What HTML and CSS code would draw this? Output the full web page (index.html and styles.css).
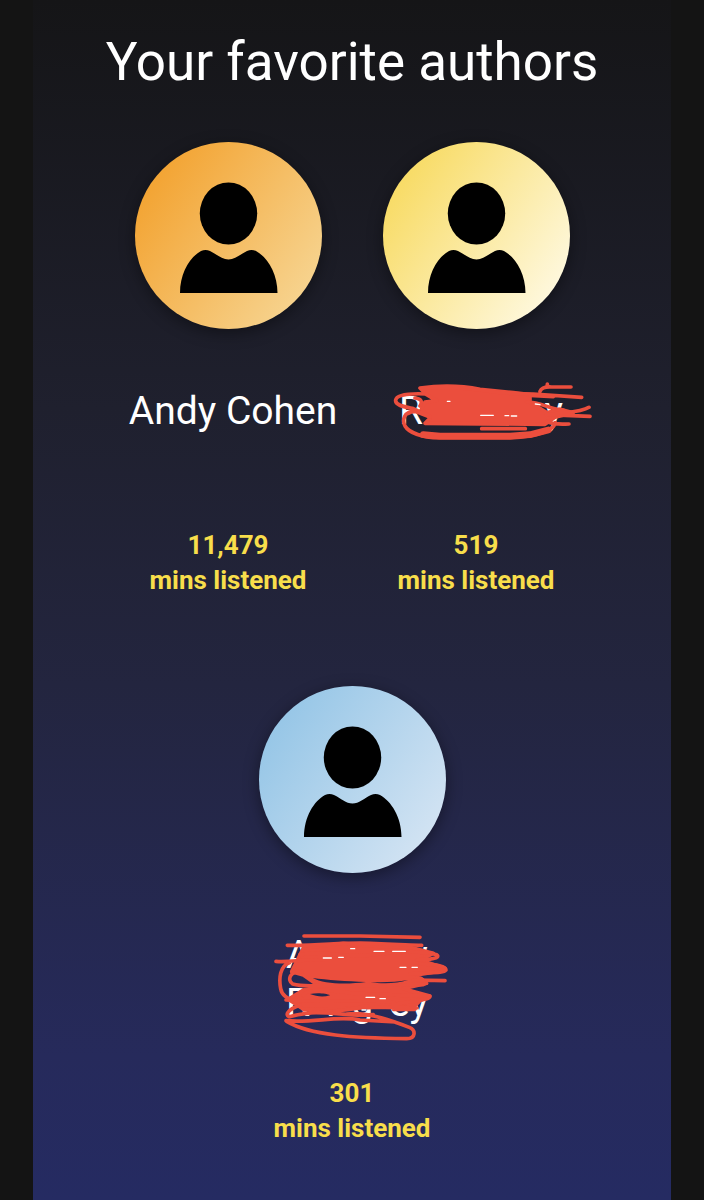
FILE: index.html
```html
<!DOCTYPE html>
<html lang="en">
<head>
    <meta charset="UTF-8">
    <meta name="viewport" content="width=device-width, initial-scale=1.0">
    <title>Your favorite authors</title>
    <link rel="stylesheet" href="styles.css">
</head>
<body>
    <svg class="symbols" aria-hidden="true">
        <symbol id="person" viewBox="0 0 187 187">
            <ellipse cx="93.5" cy="71.5" rx="28.7" ry="31"/>
            <path d="M45 151C45 131 55 115 66 109C69 107.500 72 107.500 75 109C82 112.500 87 117.500 93.500 117.500C100 117.500 105 112.500 112 109C115 107.500 118 107.500 121 109C132 115 142.500 131 142.500 151Z"/>
        </symbol>
    </svg>

    <main class="container">
        <h1>Your favorite authors</h1>
        <div class="authors">
            <section class="author">
                <div class="avatar orange"><svg><use href="#person"/></svg></div>
                <h2 class="name">Andy Cohen</h2>
                <p class="minutes">11,479<br>mins listened</p>
            </section>

            <section class="author">
                <div class="avatar yellow"><svg><use href="#person"/></svg></div>
                <h2 class="name">
                    <span class="hidden-name wide"><span>R</span><span>y</span></span>
                    <svg class="scribble one" viewBox="0 0 690 240" aria-hidden="true">
                        <path class="fill" d="M120 54C180 46 250 48 300 58L400 68L450 74L450 96L500 128L540 118L580 128L525 142L495 163L135 160L150 145L125 118L135 96L170 92L140 74Z"/>
                        <path class="bottom" d="M130 194L180 198L390 198L450 194L505 180"/>
                        <path d="M125 56C180 50 250 52 300 60S400 72 460 72L605 82M140 72C100 70 50 72 47 90C44 106 72 110 100 116L150 140M105 84C125 86 128 96 120 108M110 122C70 124 66 150 75 168C88 190 130 202 180 204L390 204C450 200 518 188 526 158M85 130C110 116 125 136 150 140M480 64C484 54 500 50 515 51H573M502 42V50M450 76L520 80M500 136C540 126 600 130 627 112M500 134L630 139M500 155C530 166 550 162 567 162M305 176H436M440 96C490 96 500 118 550 120"/>
                        <path class="gap" d="M202 94H210M375 137H386M466 102L480 104M302 136L340 136M394 138H410"/>
                    </svg>
                </h2>
                <p class="minutes">519<br>mins listened</p>
            </section>

            <section class="author">
                <div class="avatar blue"><svg><use href="#person"/></svg></div>
                <h2 class="name">
                    <span class="hidden-name"><span>A</span><span>w</span></span>
                    <span class="hidden-name"><span>R</span><span>i</span><span>g</span><span>ey</span></span>
                    <svg class="scribble two" viewBox="0 0 600 390" aria-hidden="true">
                        <path class="fill" d="M130 84L250 70L330 78L450 82L520 100L480 120L555 145L530 155L470 165L500 190L430 206L510 228L480 242L460 262L340 262L250 266L130 268L85 238L130 210L180 200L130 165L95 155L110 125Z"/>
                        <path d="M132 48L300 48L480 52M82 76C180 78 250 66 330 70S440 74 485 76M120 104C200 90 260 116 340 104S500 94 530 104C544 114 510 120 470 120M48 124C90 128 130 116 190 120M480 132C530 132 558 140 558 150C550 162 500 156 450 162M88 128C60 138 56 174 62 206C66 230 86 236 110 246M125 154C90 152 80 180 98 192C140 204 180 192 240 198L490 194C505 188 490 176 475 174M460 180L555 182M78 240C200 250 300 236 400 246M130 226C140 204 220 212 280 220L430 226L508 228C520 238 450 244 400 254M400 268H465M120 256C80 270 75 286 88 290C160 270 250 278 310 260L470 264M78 302C160 310 230 286 300 300L406 306M80 304C150 346 280 354 440 356C468 356 468 330 448 322C380 296 320 276 260 282M130 280C200 270 270 292 340 284"/>
                        <path class="shade" d="M158 174C200 180 260 184 318 186C260 194 190 192 158 174ZM332 186C370 188 410 186 444 180C410 192 360 192 332 186ZM150 222C170 218 200 220 210 226C190 232 170 230 150 222Z"/>
                        <path class="gap" d="M272 86H284M342 94H372M398 94H436M190 114H214M236 112H250M420 142H438M456 142H472M318 232H344M360 236H376M306 270H318"/>
                    </svg>
                </h2>
                <p class="minutes">301<br>mins listened</p>
            </section>
        </div>
    </main>
</body>
</html>
```

FILE: styles.css
```css
* {
    box-sizing: border-box;
    margin: 0;
    padding: 0;
}

body {
    font-family: Roboto, Arial, sans-serif;
    background-color: #141414;
    color: white;
    min-height: 100vh;
    display: flex;
    padding: 0 33px;
}

.symbols {
    display: none;
}

.container {
    flex: 1;
    padding: 30px 0 48px;
    background: linear-gradient(#151517 0%, #1f202e 34%, #23253f 57%, #262a5b 88%, #252b62 100%);
    text-align: center;
}

h1 {
    font-size: 53px;
    font-weight: 400;
    line-height: 64px;
    margin-bottom: 48px;
}

.authors {
    display: flex;
    flex-wrap: wrap;
    justify-content: center;
    row-gap: 88px;
    max-width: 640px;
    margin: 0 auto;
}

.author {
    width: 248px;
}

.avatar {
    width: 187px;
    height: 187px;
    margin: 0 auto 58px;
    border-radius: 50%;
    box-shadow: 0 4px 16px rgba(0, 0, 0, 0.4);
}

.avatar svg {
    display: block;
    width: 100%;
    height: 100%;
}

.orange {
    background: linear-gradient(125deg, #f3a535 15%, #f7d898 95%);
}

.yellow {
    background: linear-gradient(125deg, #f8dc68 15%, #fffbea 95%);
}

.blue {
    background: linear-gradient(125deg, #98c7e7 15%, #d8e6f4 95%);
}

.name {
    position: relative;
    min-height: 92px;
    margin-bottom: 49px;
    padding-left: 10px;
    font-size: 39px;
    font-weight: 400;
    line-height: 48px;
}

.hidden-name {
    display: flex;
    justify-content: space-between;
    width: 142px;
    margin: 0 auto;
}

.hidden-name.wide {
    width: 164px;
}

.scribble {
    position: absolute;
    fill: none;
    stroke: #eb4e3d;
    stroke-width: 11;
    stroke-linecap: round;
    stroke-linejoin: round;
}

.scribble .fill {
    fill: #eb4e3d;
}

.scribble .bottom {
    stroke-width: 20;
}

.scribble .shade {
    fill: #25284f;
    stroke: none;
}

.scribble .gap {
    stroke: white;
    stroke-width: 4;
}

.scribble.one {
    left: 28px;
    top: -17px;
    width: 230px;
}

.scribble.two {
    left: 32px;
    top: -11px;
    width: 200px;
}

.minutes {
    color: #f8de4b;
    font-size: 26px;
    font-weight: 700;
    line-height: 35px;
}
```
